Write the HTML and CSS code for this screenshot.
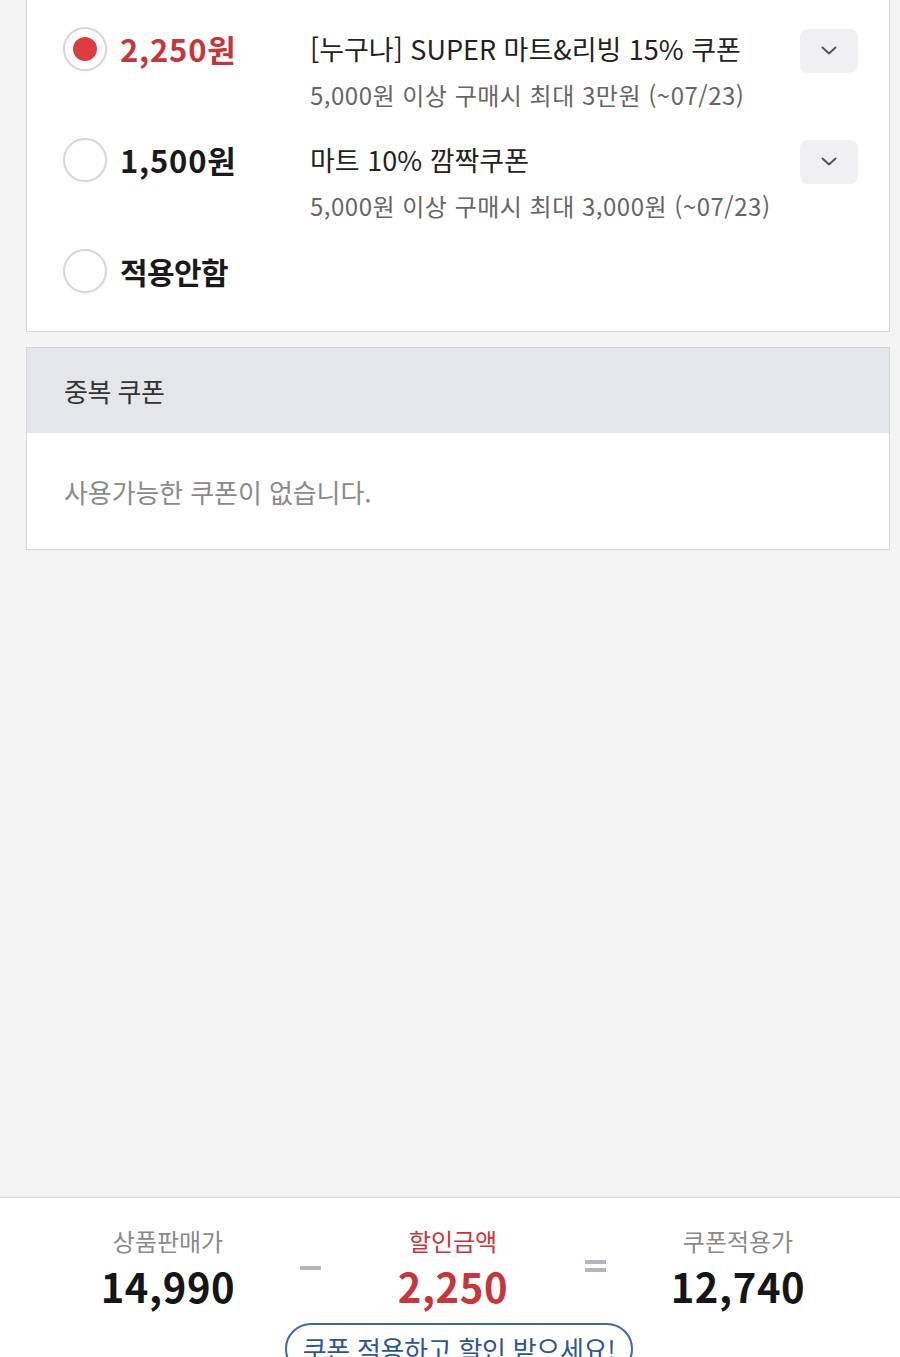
FILE: index.html
```html
<!DOCTYPE html>
<html lang="ko">
<head>
<meta charset="utf-8">
<title>쿠폰 적용</title>
<link rel="stylesheet" href="styles.css">
</head>
<body>
<div class="page">
  <main class="content">
    <section class="card coupons">
      <div class="row">
        <span class="radio checked"></span>
        <div class="price red num-price">2,250원</div>
        <div class="info">
          <div class="title">[누구나] SUPER 마트&amp;리빙 15% 쿠폰</div>
          <div class="desc">5,000원 이상 구매시 최대 3만원 (~07/23)</div>
        </div>
        <button class="toggle" type="button" aria-label="펼치기">
          <svg width="18" height="10" viewBox="0 0 18 10"><path d="M2.5 1.5 L9 7.5 L15.5 1.5" fill="none" stroke="#555" stroke-width="2" stroke-linecap="round" stroke-linejoin="round"/></svg>
        </button>
      </div>
      <div class="row">
        <span class="radio"></span>
        <div class="price num-price">1,500원</div>
        <div class="info">
          <div class="title">마트 10% 깜짝쿠폰</div>
          <div class="desc">5,000원 이상 구매시 최대 3,000원 (~07/23)</div>
        </div>
        <button class="toggle" type="button" aria-label="펼치기">
          <svg width="18" height="10" viewBox="0 0 18 10"><path d="M2.5 1.5 L9 7.5 L15.5 1.5" fill="none" stroke="#555" stroke-width="2" stroke-linecap="round" stroke-linejoin="round"/></svg>
        </button>
      </div>
      <div class="row">
        <span class="radio"></span>
        <div class="price">적용안함</div>
      </div>
    </section>

    <section class="card dup">
      <div class="dup-head">중복 쿠폰</div>
      <div class="dup-body">사용가능한 쿠폰이 없습니다.</div>
    </section>
  </main>

  <footer class="summary">
    <div class="calc">
      <div class="col">
        <div class="label">상품판매가</div>
        <div class="num">14,990</div>
      </div>
      <div class="op"><span class="minus"></span></div>
      <div class="col">
        <div class="label red">할인금액</div>
        <div class="num red">2,250</div>
      </div>
      <div class="op"><span class="equals"></span></div>
      <div class="col">
        <div class="label">쿠폰적용가</div>
        <div class="num">12,740</div>
      </div>
    </div>
    <div class="cta-wrap">
      <button class="cta" type="button">쿠폰 적용하고 할인 받으세요!</button>
    </div>
  </footer>
</div>
</body>
</html>
```

FILE: styles.css
```css
* { box-sizing: border-box; }
html, body { margin: 0; padding: 0; }
body {
  background: #f4f4f5;
  font-family: "Noto Sans CJK KR", "Noto Sans", sans-serif;
  color: #222;
}
.page {
  height: 1357px;
  display: flex;
  flex-direction: column;
  overflow: hidden;
}
.content {
  flex: 1;
  padding: 0 10px 0 26px;
}
.card {
  background: #fff;
  border: 1px solid #d3d6dc;
}
.coupons {
  border-top: none;
  padding: 27px 31px 38px 36px;
  display: flex;
  flex-direction: column;
  gap: 26px;
}
.row {
  display: flex;
  align-items: flex-start;
}
.radio {
  flex: none;
  width: 44px;
  height: 44px;
  border-radius: 50%;
  border: 2px solid #d6d6d8;
  box-shadow: 0 1px 2px rgba(0,0,0,0.06);
  background: #fff;
  display: flex;
  align-items: center;
  justify-content: center;
}
.radio.checked::after {
  content: "";
  width: 24px;
  height: 24px;
  border-radius: 50%;
  background: #dd3c40;
}
.price {
  width: 203px;
  flex: none;
  padding-left: 13px;
  font-size: 30px;
  font-weight: 700;
  line-height: 44px;
  color: #1a1a1a;
  letter-spacing: -0.6px;
}
.num-price {
  font-size: 31px;
  letter-spacing: 0.8px;
}
.price.red { color: #c7363b; }
.info {
  flex: 1;
  min-width: 0;
}
.title {
  font-size: 27px;
  line-height: 44px;
  color: #222;
  letter-spacing: 0;
  white-space: nowrap;
}
.desc {
  margin-top: 7px;
  font-size: 24px;
  line-height: 34px;
  color: #666;
  letter-spacing: 0.5px;
  white-space: nowrap;
}
.toggle {
  flex: none;
  width: 58px;
  height: 44px;
  margin-top: 2px;
  margin-left: -1px;
  border: none;
  border-radius: 8px;
  background: #f0f0f2;
  display: flex;
  align-items: center;
  justify-content: center;
  padding: 0;
}
.dup {
  margin-top: 15px;
}
.dup-head {
  background: #e5e6ea;
  height: 85px;
  padding-left: 37px;
  display: flex;
  align-items: center;
  font-size: 26px;
  color: #333;
  letter-spacing: -0.5px;
}
.dup-body {
  height: 116px;
  padding-left: 37px;
  display: flex;
  align-items: center;
  font-size: 26px;
  color: #8a8a8a;
  letter-spacing: -0.1px;
}
.summary {
  flex: none;
  height: 160px;
  background: #fff;
  border-top: 1px solid #dcdce0;
  box-shadow: 0 -1px 2px rgba(0,0,0,0.04);
  padding-top: 26px;
  overflow: hidden;
}
.calc {
  display: grid;
  grid-template-columns: repeat(5, 142.5px);
  justify-content: center;
  padding-left: 6px;
}
.col { text-align: center; }
.label {
  font-size: 24px;
  line-height: 34px;
  color: #8a8a8a;
  letter-spacing: 0;
}
.label.red { color: #c7363b; }
.num {
  margin-top: 4px;
  font-size: 40px;
  font-weight: 700;
  line-height: 48px;
  color: #161616;
  letter-spacing: 0.6px;
}
.num.red { color: #c7363b; }
.op {
  display: flex;
  justify-content: center;
  padding-top: 41px;
}
.minus {
  display: block;
  width: 21px;
  height: 4px;
  background: #b3b6be;
  margin-top: 1px;
}
.equals {
  display: block;
  width: 21px;
  height: 12px;
  border-top: 4px solid #b3b6be;
  border-bottom: 4px solid #b3b6be;
  margin-top: -5px;
}
.cta-wrap {
  display: flex;
  justify-content: center;
  margin-top: 13px;
  padding-left: 18px;
}
.cta {
  width: 348px;
  height: 52px;
  border: 2px solid #3e67a6;
  border-radius: 28px;
  background: #fff;
  color: #2d5592;
  font-family: "Noto Sans CJK KR", "Noto Sans", sans-serif;
  font-size: 26px;
  line-height: 44px;
  letter-spacing: -0.3px;
  padding: 0;
}
```
